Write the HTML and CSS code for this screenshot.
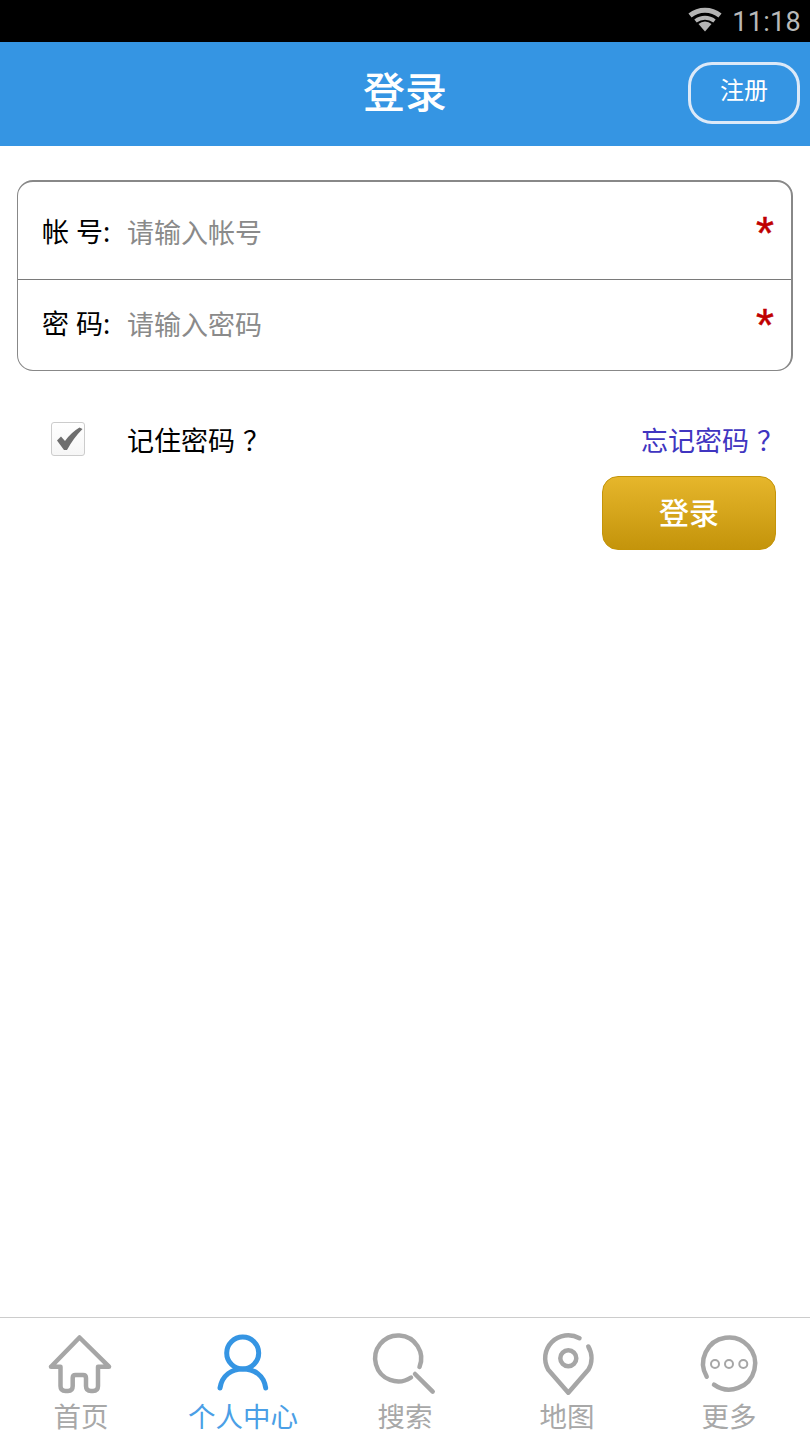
FILE: index.html
```html
<!DOCTYPE html>
<html lang="zh-CN">
<head>
<meta charset="utf-8">
<title>登录</title>
<link rel="stylesheet" href="styles.css">
</head>
<body>
<div class="page">
  <div class="statusbar">
    <svg class="wifi" width="34" height="28" viewBox="0 0 34 28">
      <path class="wifi-arc a1" d="M2 9.5 A24 24 0 0 1 32 9.5"/>
      <path class="wifi-arc a2" d="M7.5 15 A16 16 0 0 1 26.500 15"/>
      <path class="wifi-core" d="M17 25.500 L10.500 18 A9.500 9.500 0 0 1 23.500 18 Z"/>
    </svg>
    <span class="clock">11:18</span>
  </div>
  <header class="header">
    <h1 class="title">登录</h1>
    <a class="register">注册</a>
  </header>
  <main class="main">
    <section class="card">
      <div class="row row-first">
        <span class="label">帐 号:</span>
        <span class="placeholder">请输入帐号</span>
        <span class="star">*</span>
      </div>
      <div class="row">
        <span class="label">密 码:</span>
        <span class="placeholder">请输入密码</span>
        <span class="star">*</span>
      </div>
    </section>
    <div class="options">
      <span class="checkbox">
        <svg width="34" height="34" viewBox="0 0 34 34"><path class="tick" d="M6 18.500 L10 14.500 L14 19 Q20 10.500 28.500 5.500 L31.500 7 Q22.500 16 16 28 L13 28 Z"/></svg>
      </span>
      <span class="remember">记住密码<span class="qmark">？</span></span>
      <a class="forgot">忘记密码<span class="qmark">？</span></a>
    </div>
    <div class="actions">
      <button class="login">登录</button>
    </div>
  </main>
  <nav class="tabbar">
    <a class="tab">
      <svg class="icon" width="70" height="66" viewBox="0 0 70 66">
        <path d="M5 34.700 L33.500 5.500 L63 34.700 M5 34.700 H14.500 V54 Q14.500 59 19.500 59 H22 Q26.700 59 26.700 54 V46 Q26.700 43 29.500 43 H37 Q40 43 40 46 V54 Q40 59 45 59 H47 Q52 59 52 54 V34.700 H63"/>
      </svg>
      <span class="tab-label">首页</span>
    </a>
    <a class="tab tab-active">
      <svg class="icon" width="70" height="66" viewBox="0 0 70 66">
        <circle cx="34.700" cy="21" r="16"/>
        <path d="M12 56 C14 43 24 37 34.700 37 C46 37 56 43 57.700 56"/>
      </svg>
      <span class="tab-label">个人中心</span>
    </a>
    <a class="tab">
      <svg class="icon" width="70" height="66" viewBox="0 0 70 66">
        <path d="M49.500 35 A23 23 0 1 0 41 45.500"/>
        <path d="M45 42 L62.700 59.700"/>
      </svg>
      <span class="tab-label">搜索</span>
    </a>
    <a class="tab">
      <svg class="icon" width="70" height="66" viewBox="0 0 70 66">
        <path d="M47.500 6.200 A23 23 0 0 0 16.300 37.800 L36.300 60.700 L56.300 37.800 A23 23 0 0 0 56.300 14.500"/>
        <circle cx="36.300" cy="26.300" r="8"/>
      </svg>
      <span class="tab-label">地图</span>
    </a>
    <a class="tab">
      <svg class="icon" width="70" height="66" viewBox="0 0 70 66">
        <path d="M12.700 44.700 A26 26 0 1 1 20 52.700"/>
        <circle class="dot" cx="21" cy="32" r="4"/>
        <circle class="dot" cx="35" cy="32" r="4"/>
        <circle class="dot" cx="49.300" cy="32" r="4"/>
      </svg>
      <span class="tab-label">更多</span>
    </a>
  </nav>
</div>
</body>
</html>
```
FILE: styles.css
```css
* { box-sizing: border-box; }
html, body { margin: 0; padding: 0; background: #fff; }
body { font-family: "Noto Sans", "Noto Sans CJK SC", sans-serif; }
.page { width: 810px; height: 1440px; display: flex; flex-direction: column; overflow: hidden; }

.statusbar { height: 42px; background: #000; display: flex; align-items: center; justify-content: flex-end; padding-right: 9px; gap: 10px; }
.wifi { margin-top: -2px; }
.wifi-arc { fill: none; stroke: #b4b4b4; }
.a1 { stroke-width: 5; }
.a2 { stroke-width: 4; }
.wifi-core { fill: #b4b4b4; }
.clock { font-family: Roboto, sans-serif; font-size: 27px; line-height: 42px; padding-top: 2px; color: #b9b9b9; letter-spacing: 0.3px; }

.header { height: 104px; background: #3595e3; display: flex; align-items: center; justify-content: center; position: relative; }
.title { margin: 0; font-size: 42px; font-weight: 500; line-height: 100px; padding-bottom: 4px; color: #fff; }
.register { position: absolute; left: 688px; top: 20px; width: 112px; height: 62px; border: 3px solid #dce9f8; border-radius: 24px; display: flex; align-items: center; justify-content: center; color: #fff; font-size: 24px; line-height: 30px; padding-bottom: 6px; }

.main { flex: 1; padding: 34px 17px 0; }
.card { height: 191px; border: 1px solid #888; border-top-width: 2px; border-right-width: 2px; border-radius: 16px; display: flex; flex-direction: column; }
.row { height: 90px; display: flex; align-items: center; padding: 0 17px 0 24px; }
.row-first { height: 98px; border-bottom: 1px solid #7a7a7a; padding-top: 5px; }
.label { width: 85px; font-size: 27px; line-height: 36px; margin-top: -2px; color: #000; white-space: pre; }
.placeholder { flex: 1; font-size: 27px; line-height: 36px; color: #8a8a8a; }
.star { font-family: "Liberation Sans", sans-serif; font-size: 46px; line-height: 46px; color: #c00000; height: 36px; margin-top: -10px; -webkit-text-stroke: 0.5px #c00000; }

.options { display: flex; align-items: center; height: 34px; margin-top: 51px; padding: 0 17px 0 34px; }
.checkbox { width: 34px; height: 34px; border: 1px solid #ccc; border-radius: 3px; background: linear-gradient(#fff, #f6f6f6); display: block; flex: none; }
.checkbox svg { display: block; margin: -1px; }
.tick { fill: #6e6e6e; }
.remember { margin-left: 42px; flex: 1; font-size: 27px; line-height: 38px; padding-top: 4px; color: #000; }
.forgot { font-size: 27px; line-height: 38px; padding-top: 4px; color: #4035c0; }
.qmark { display: inline-block; width: 27px; padding-left: 8px; }

.actions { display: flex; justify-content: flex-end; padding-right: 17px; margin-top: 20px; }
.login { width: 174px; height: 74px; border: 1px solid #c49409; border-radius: 16px; background: linear-gradient(#e6b62b, #c4940b); color: #fff; font-family: inherit; font-size: 30px; font-weight: 500; line-height: 40px; padding: 0; }

.tabbar { height: 123px; border-top: 1px solid #ccc; display: flex; }
.tab { width: 162px; display: flex; flex-direction: column; align-items: center; padding-top: 14px; color: #a8a8a8; }
.tab-active { color: #4b9fe6; }
.icon { display: block; fill: none; stroke: #a6a6a6; stroke-width: 4.500; stroke-linecap: round; stroke-linejoin: round; }
.tab-active .icon { stroke: #3595e3; stroke-width: 5; }
.dot { stroke-width: 2; }
.tab-label { font-size: 27.500px; line-height: 38px; white-space: nowrap; }
```
